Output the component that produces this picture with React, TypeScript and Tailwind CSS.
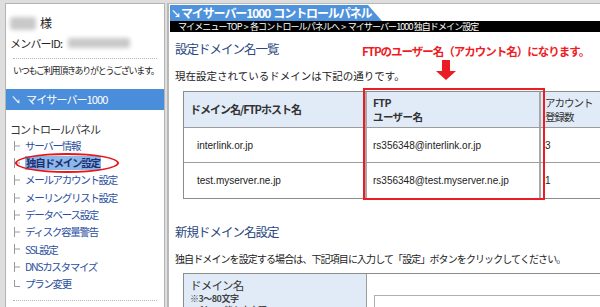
import React from "react";

const jp = "font-['Noto_Sans_CJK_JP','Noto_Sans',sans-serif]";
const lat = "font-['Liberation_Sans','Noto_Sans_CJK_JP',sans-serif]";

function Tree({ last }: { last?: boolean }) {
  return (
    <svg width="8" height="12" className="shrink-0">
      <path
        d={last ? "M1.5 2V8.5H7" : "M1.5 1V11M1.5 6H7"}
        stroke="#9a9a9a"
        strokeWidth="1"
        fill="none"
      />
    </svg>
  );
}

const items = [
  "サーバー情報",
  "独自ドメイン設定",
  "メールアカウント設定",
  "メーリングリスト設定",
  "データベース設定",
  "ディスク容量警告",
  "SSL設定",
  "DNSカスタマイズ",
  "プラン変更",
];

export default function App() {
  return (
    <div
      className={`w-[600px] h-[307px] overflow-hidden bg-[#dedede] flex pt-[3px] pl-[5px] ${jp}`}
    >
      {/* Left panel */}
      <aside className="w-[160px] shrink-0 h-[330px] bg-white border border-[#b4b4b4] flex flex-col">
        <div className="mt-[11px] h-[16px] flex items-center pl-[4px] text-[12px] text-[#222]">
          <span className="w-[26px] h-[13px] bg-[#c9c9c9] rounded-[3px] blur-[2px]" />
          <span className="ml-[4px]">様</span>
        </div>
        <div className="mt-[4px] h-[16px] flex items-center pl-[4px] text-[11px] tracking-[-0.8px] text-[#222]">
          <span>メンバーID:</span>
          <span className="ml-[6px] w-[62px] h-[10px] bg-[#c9c9c9] rounded-[2px] blur-[2px]" />
        </div>
        <div className="mt-[7px] mx-[7px] border-t border-dotted border-[#b8b8b8]" />
        <div className="mt-[6px] h-[12px] flex items-center pl-[7px] text-[9px] tracking-[-1.3px] text-[#222] whitespace-nowrap">
          いつもご利用頂きありがとうございます。
        </div>
        <div className="mt-[12px] h-[21px] bg-[#4a8ddb] flex items-center pl-[5px] text-white text-[11px] tracking-[-0.9px]">
          <span className="text-[10px] mr-[6px]">↘</span>
          <span>マイサーバー1000</span>
        </div>
        <div className="mt-[12px] h-[14px] flex items-center pl-[4px] text-[11px] tracking-[-1px] text-[#333]">
          コントロールパネル
        </div>
        <ul className="mt-[1px] flex flex-col">
          {items.map((t, i) => (
            <li
              key={t}
              className="relative h-[17.3px] flex items-center pl-[7px] text-[10.5px] tracking-[-1.3px] text-[#2b4f9e] whitespace-nowrap"
            >
              <Tree last={i === items.length - 1} />
              {i === 1 ? (
                <>
                  <span className="ml-[4px] bg-[#8cb8e8] px-[1px] h-[14px] flex items-center font-bold text-[#1d2f73]">
                    {t}
                  </span>
                  <span className="absolute left-[9px] top-[-1px] w-[104px] h-[20px] border-2 border-[#e8151b] rounded-[50%]" />
                </>
              ) : (
                <span className="ml-[4px]">{t}</span>
              )}
            </li>
          ))}
        </ul>
        <div className="mt-[7px] mx-[7px] border-t border-dotted border-[#b8b8b8]" />
      </aside>

      {/* Right panel */}
      <main className="relative ml-[2px] flex-1 h-[330px] overflow-hidden bg-white border-l-2 border-t border-[#b9b9b9]">
        <div className="pl-[1px] pt-[1px]">
          <div className="h-[16px] w-[212px] bg-[#4f93dc] [clip-path:polygon(0_0,198px_0,100%_100%,0_100%)] flex items-center pl-[1px] text-white font-bold text-[12px] tracking-[-1.1px] whitespace-nowrap">
            <span className="text-[10px] mr-[1px]">↘</span>マイサーバー1000&nbsp; コントロールパネル
          </div>
          <div className="h-[11px] bg-black flex items-center pl-[8px] text-white text-[9px] tracking-[-0.9px] whitespace-nowrap">
            マイメニューTOP&nbsp; &gt;&nbsp; 各コントロールパネルへ&nbsp; &gt;&nbsp; マイサーバー1000 独自ドメイン設定
          </div>
        </div>

        <section className="pl-[6px]">
          <h2 className="mt-[9px] h-[16px] flex items-center text-[12.5px] tracking-[-1px] text-[#2a477e]">
            設定ドメイン名一覧
          </h2>
          <p className="mt-[12px] h-[14px] flex items-center text-[10.5px] tracking-[0px] text-[#222] whitespace-nowrap">
            現在設定されているドメインは下記の通りです。
          </p>

          <div className="relative ml-[8px] mt-[8px] w-[440px] border border-[#8c8c8c] text-[#222]">
            <div className="flex h-[36px] bg-[#e1ebf7] border-b border-[#9c9c9c]">
              <div className="w-[181px] flex items-center pl-[6px] text-[11px] tracking-[-1px] font-bold text-[#333]">
                ドメイン名/FTPホスト名
              </div>
              <div className="w-[176px] border-l-2 border-r-2 border-[#a8a8a8] flex flex-col justify-center pl-[6px] text-[10.5px] leading-[14px] tracking-[-0.6px] font-bold text-[#333]">
                <span className="h-[14px] flex items-center">FTP</span>
                <span className="h-[14px] flex items-center">ユーザー名</span>
              </div>
              <div className="flex-1 flex flex-col justify-center pl-[4px] text-[10.5px] leading-[14px] tracking-[-1px] text-[#333]">
                <span className="h-[14px] flex items-center">アカウント</span>
                <span className="h-[14px] flex items-center">登録数</span>
              </div>
            </div>
            {[
              ["interlink.or.jp", "rs356348@interlink.or.jp", "3"],
              ["test.myserver.ne.jp", "rs356348@test.myserver.ne.jp", "1"],
            ].map((r, i) => (
              <div
                key={r[0]}
                className={`flex h-[35px] ${i === 0 ? "border-b border-[#9c9c9c]" : ""} text-[10px] ${lat}`}
              >
                <div className="w-[181px] flex items-center pl-[13px]">{r[0]}</div>
                <div className="w-[176px] border-l-2 border-r-2 border-[#a8a8a8] flex items-center pl-[6px]">
                  {r[1]}
                </div>
                <div className="flex-1 flex items-center pl-[4px]">{r[2]}</div>
              </div>
            ))}
            {/* red highlight box */}
            <div className="absolute left-[179px] top-[-4px] w-[182px] h-[112px] border-2 border-[#ec1c24]" />
          </div>

          <h2 className="mt-[25px] h-[16px] flex items-center text-[12.5px] tracking-[-1px] text-[#2a477e]">
            新規ドメイン名設定
          </h2>
          <p className="mt-[11px] h-[14px] flex items-center text-[10px] tracking-[-0.9px] text-[#222] whitespace-nowrap">
            独自ドメインを設定する場合は、下記項目に入力して「設定」ボタンをクリックしてください。
          </p>
          <div className="ml-[8px] mt-[8px] w-[440px] h-[60px] border border-[#8c8c8c] flex">
            <div className="w-[183px] bg-[#e1ebf7] border-r border-[#9c9c9c] pl-[6px] pt-[4px] flex flex-col">
              <span className="h-[15px] flex items-center text-[11.5px] tracking-[-0.8px] text-[#333]">ドメイン名</span>
              <span className="h-[12px] flex items-center text-[9px] font-bold tracking-[-0.5px] text-[#444]">※3～80文字</span>
              <span className="h-[12px] flex items-center text-[9px] font-bold tracking-[-0.5px] text-[#444]">※利用可能な文字種</span>
            </div>
            <div className="flex-1 pl-[7px] pt-[21px]">
              <div className="h-[24px] border border-[#b0b0b0] bg-white" />
            </div>
          </div>
        </section>

        {/* annotation */}
        <div className="absolute left-[193px] top-[40px] h-[16px] flex items-center text-[11.5px] font-bold tracking-[-1px] text-[#ee1c24] whitespace-nowrap">
          FTPのユーザー名（アカウント名）になります。
        </div>
        <svg className="absolute left-[266px] top-[56px]" width="22" height="21" viewBox="0 0 22 21">
          <path d="M7 0H15V11H21L11 20L1 11H7Z" fill="#ec1c24" />
        </svg>
      </main>
    </div>
  );
}
